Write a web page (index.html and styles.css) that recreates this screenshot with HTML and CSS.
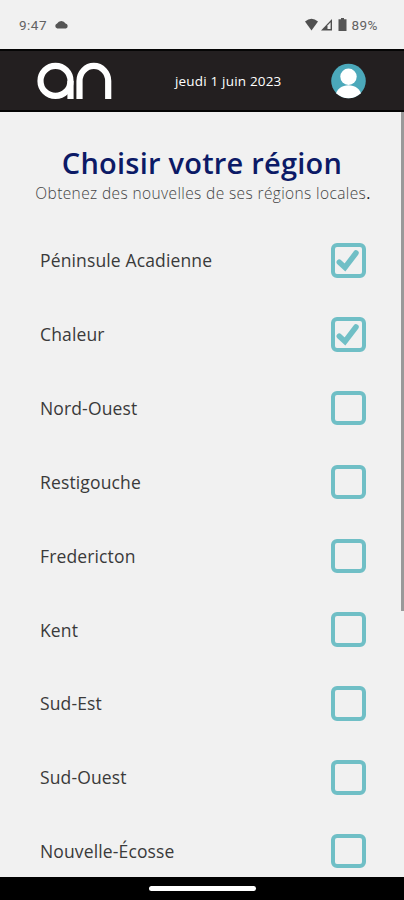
FILE: index.html
```html
<!DOCTYPE html>
<html lang="fr">
<head>
<meta charset="utf-8">
<meta name="viewport" content="width=device-width">
<title>Choisir votre région</title>
<link rel="stylesheet" href="styles.css">
</head>
<body>
<div class="phone">
  <div class="status">
    <span class="time">9:47</span>
    <svg class="cloud" width="15" height="10" viewBox="0 0 15 10"><path d="M3.200 8.500a2.600 2.600 0 0 1-.1-5A4.700 4.700 0 0 1 11.500 3.500 2.600 2.600 0 0 1 12 8.500Z" fill="#555"/></svg>
    <svg class="signals" width="44" height="16" viewBox="0 0 44 16"><path d="M0 4.500Q6.500 -1 13 4.500L6.500 13.500Z" fill="#505050"/><path d="M16 13.500 27 2v11.500Z" fill="#505050"/><path d="M22.500 8.500 25.600 5.200V12H22.500Z" fill="#f1f1f1"/><path d="M36 1h3v1.300h2.500V14h-8V2.300h2.500Z" fill="#555"/></svg>
    <span class="battery">89%</span>
  </div>
  <header class="topbar">
    <svg class="logo" width="75" height="38" viewBox="0 0 75 38" fill="none" stroke="#fff" stroke-width="6.200"><circle cx="18.500" cy="18.900" r="15"/><path d="M33.500 18.900V37M42.500 37V18.900a14.350 15 0 0 1 28.700 0V37"/></svg>
    <time class="date">jeudi 1 juin 2023</time>
    <svg class="avatar" width="35" height="36" viewBox="0 0 35 36"><defs><clipPath id="disc"><circle cx="17.500" cy="18" r="17.300"/></clipPath></defs><g clip-path="url(#disc)"><path d="M0 0h35v36H0z" fill="#4ba8ba"/><circle cx="17.500" cy="13.700" r="8.200" fill="#fff"/><path d="M4 34C5.500 25.500 11 22.300 17.500 22.300S29.500 25.500 31 34v3H4Z" fill="#fff"/></g></svg>
  </header>
  <main class="content">
    <h1>Choisir votre région</h1>
    <p class="lead">Obtenez des nouvelles de ses régions locales<span class="dot">.</span></p>
    <ul class="regions">
      <li><span>Péninsule Acadienne</span><i class="box"><svg viewBox="0 0 26 26"><path d="M4.300 15.200 10 20.500 21 6"/></svg></i></li>
      <li><span>Chaleur</span><i class="box"><svg viewBox="0 0 26 26"><path d="M4.300 15.200 10 20.500 21 6"/></svg></i></li>
      <li><span>Nord-Ouest</span><i class="box"></i></li>
      <li><span>Restigouche</span><i class="box"></i></li>
      <li><span>Fredericton</span><i class="box"></i></li>
      <li><span>Kent</span><i class="box"></i></li>
      <li><span>Sud-Est</span><i class="box"></i></li>
      <li><span>Sud-Ouest</span><i class="box"></i></li>
      <li><span>Nouvelle-Écosse</span><i class="box"></i></li>
    </ul>
    <div class="scrollbar"></div>
  </main>
  <footer class="navbar"><div class="handle"></div></footer>
</div>
</body>
</html>
```
FILE: styles.css
```css
* { box-sizing: border-box; }
body { margin: 0; background: #f1f1f1; font-family: "Open Sans", sans-serif; }
svg { display: block; flex: none; }
.phone { width: 404px; height: 900px; display: flex; flex-direction: column; overflow: hidden; }
.status { height: 49px; flex: none; display: flex; align-items: center; padding: 0 26px 0 19px; color: #626262; font: 13.500px Roboto, sans-serif; letter-spacing: .5px; }
.time { width: 35px; }
.signals { margin-left: auto; margin-right: 2px; }
.topbar { height: 63px; flex: none; background: #231f20; border-top: 2px solid #050505; border-bottom: 2px solid #050505; display: flex; align-items: center; padding: 0 38px 0 37px; }
.date { margin-left: 63px; color: #fff; font-size: 13.500px; letter-spacing: .18px; white-space: nowrap; }
.avatar { margin-left: auto; }
.content { position: relative; height: 765px; flex: none; overflow: hidden; }
h1 { margin: 32px 0 0; height: 38px; line-height: 38px; text-align: center; font-size: 29px; font-weight: 600; letter-spacing: .23px; color: #0c1a66; white-space: nowrap; }
.lead { margin: 0; height: 24px; line-height: 23px; padding-left: 2px; text-align: center; font-size: 15.500px; font-weight: 300; letter-spacing: .38px; color: #444; white-space: nowrap; }
.dot { color: #111; font-weight: 400; }
.regions { list-style: none; margin: 17.500px 0 0; padding: 0 38.500px 0 40px; }
.regions li { height: 73.850px; display: flex; align-items: center; justify-content: space-between; color: #3a3a3a; font-size: 17.500px; letter-spacing: .14px; }
.box { width: 34.500px; height: 34.500px; border: 4px solid #70bfc6; border-radius: 6px; }
.box svg { width: 26px; height: 26px; fill: none; stroke: #70bfc6; stroke-width: 5.500; stroke-linecap: round; }
.scrollbar { position: absolute; top: 0; right: 0; width: 3px; height: 499px; background: #999; }
.navbar { flex: none; height: 23px; background: #000; display: flex; justify-content: center; padding-top: 9px; }
.handle { width: 107px; height: 5px; border-radius: 3px; background: #fff; }
```
